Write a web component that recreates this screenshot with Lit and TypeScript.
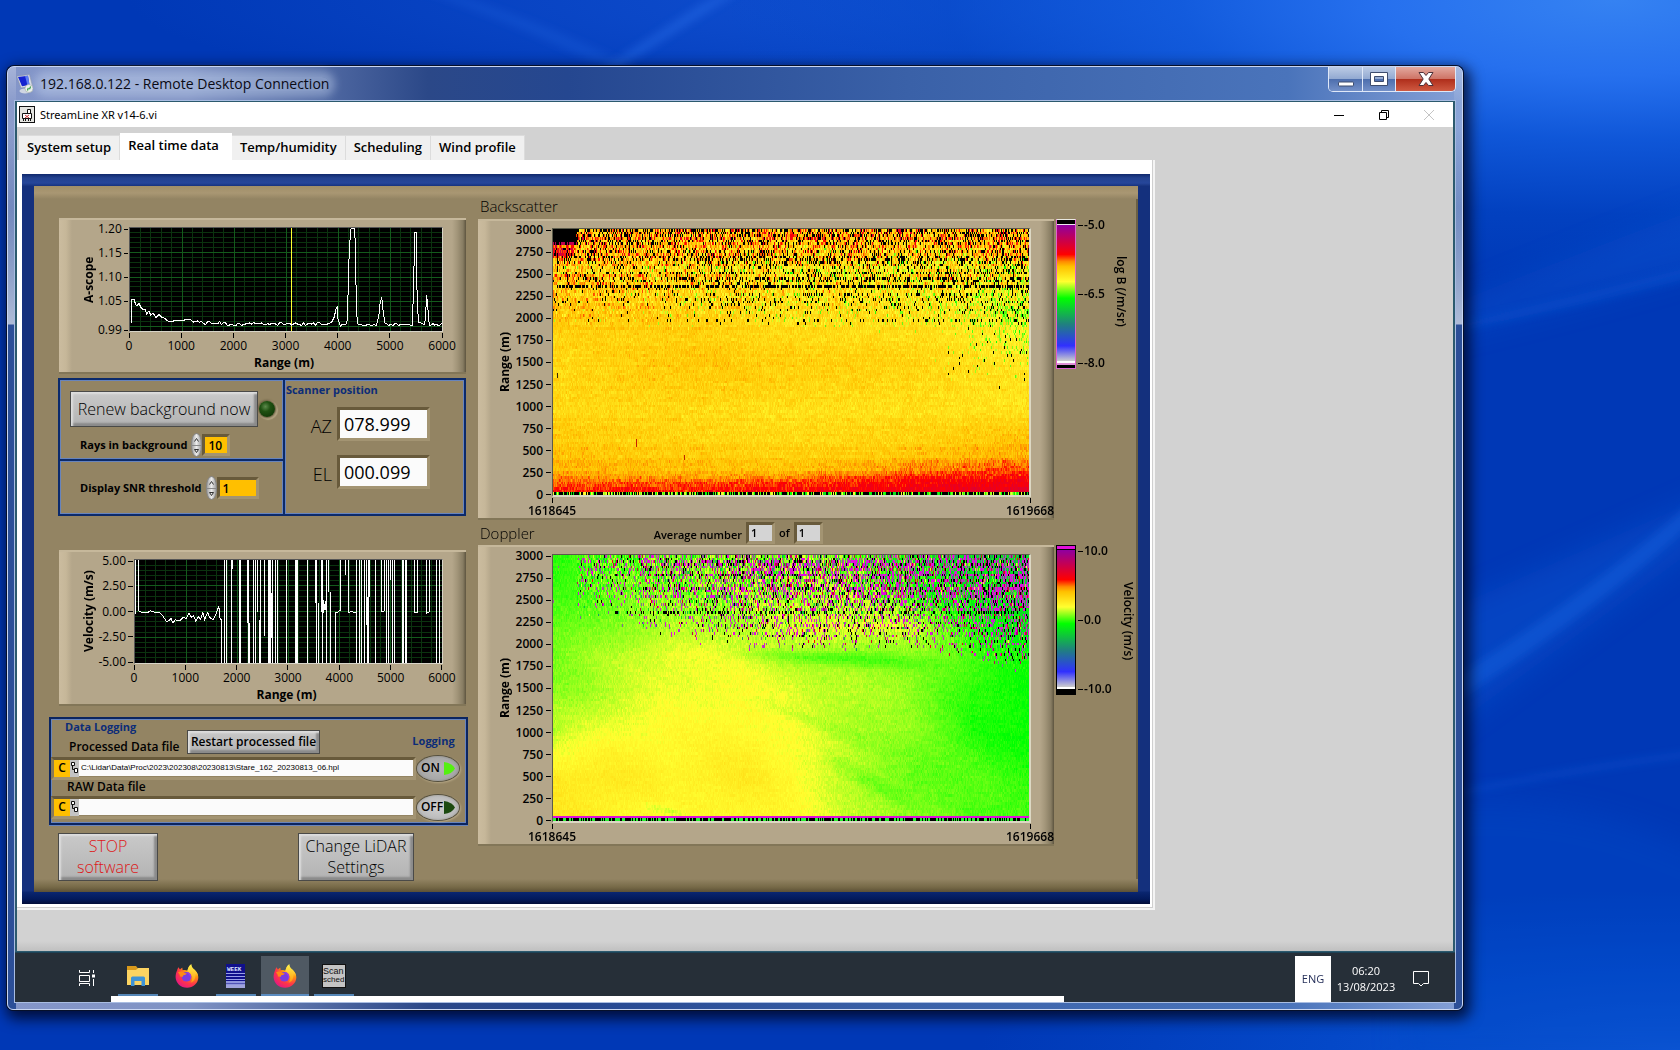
import { LitElement, html, svg, css, nothing } from "lit";
import { customElement, property, state, query } from "lit/decorators.js";
import { classMap } from "lit/directives/class-map.js";
import { styleMap } from "lit/directives/style-map.js";

/* ---------- shared helpers ---------- */

const FONT = css`"Open Sans", "Noto Sans", "Liberation Sans", sans-serif`;

function rng(seed: number) {
  let s = seed >>> 0;
  return () => {
    s = (s + 0x6d2b79f5) >>> 0;
    let t = s;
    t = Math.imul(t ^ (t >>> 15), t | 1);
    t ^= t + Math.imul(t ^ (t >>> 7), t | 61);
    return ((t ^ (t >>> 14)) >>> 0) / 4294967296;
  };
}

type RGB = [number, number, number];
const RAMP: [number, RGB][] = [
  [0, [205, 205, 205]],
  [0.125, [48, 48, 255]],
  [0.28, [32, 128, 128]],
  [0.47, [0, 255, 0]],
  [0.59, [255, 255, 48]],
  [0.7, [255, 192, 0]],
  [0.735, [255, 140, 0]],
  [0.787, [255, 0, 0]],
  [1, [143, 0, 160]],
];

function rampColor(t: number): RGB {
  if (t <= 0) return RAMP[0][1];
  for (let i = 1; i < RAMP.length; i++) {
    const [b, cb] = RAMP[i];
    if (t <= b) {
      const [a, ca] = RAMP[i - 1];
      const k = (t - a) / (b - a);
      return [0, 1, 2].map((n) => ca[n] + (cb[n] - ca[n]) * k) as RGB;
    }
  }
  return RAMP[RAMP.length - 1][1];
}

function sampleGrid(rows: number[], cols: number[], v: number[][], h: number, x: number) {
  const find = (arr: number[], q: number): [number, number] => {
    if (q <= arr[0]) return [0, 0];
    for (let i = 1; i < arr.length; i++) {
      if (q <= arr[i]) return [i - 1, (q - arr[i - 1]) / (arr[i] - arr[i - 1])];
    }
    return [arr.length - 2, 1];
  };
  const [r, kr] = find(rows, h);
  const [c, kc] = find(cols, x);
  const a = v[r][c] + (v[r][c + 1] - v[r][c]) * kc;
  const b = v[r + 1][c] + (v[r + 1][c + 1] - v[r + 1][c]) * kc;
  return a + (b - a) * kr;
}

const clamp = (v: number, a = 0, b = 1) => Math.max(a, Math.min(b, v));

/** Dark band following a line, fading in and out between two x fractions. */
const band = (x: number, from: number, to: number, dist: number, width: number) =>
  x <= from || x >= to ? 0 : Math.sin((Math.PI * (x - from)) / (to - from)) * Math.exp(-Math.pow(dist / width, 2));

const B_ROWS = [40, 150, 230, 320, 450, 700, 1000, 1500, 2000, 2500, 3000];
const B_COLS = [0, 0.25, 0.5, 0.75, 1];
const B_VALS = [
  [0.785, 0.775, 0.79, 0.81, 0.84],
  [0.75, 0.755, 0.77, 0.79, 0.805],
  [0.725, 0.715, 0.725, 0.77, 0.79],
  [0.705, 0.695, 0.685, 0.725, 0.765],
  [0.695, 0.68, 0.672, 0.69, 0.715],
  [0.68, 0.665, 0.655, 0.665, 0.69],
  [0.66, 0.66, 0.65, 0.645, 0.645],
  [0.655, 0.685, 0.675, 0.665, 0.63],
  [0.685, 0.675, 0.65, 0.65, 0.615],
  [0.68, 0.67, 0.65, 0.65, 0.65],
  [0.7, 0.7, 0.705, 0.7, 0.7],
];

const D_ROWS = [0, 500, 1000, 1500, 1900, 2200, 2600, 3000];
const D_COLS = [0, 0.12, 0.25, 0.4, 0.5, 0.6, 0.75, 0.88, 1];
const D_VALS = [
  [0.63, 0.61, 0.595, 0.605, 0.6, 0.572, 0.54, 0.51, 0.495],
  [0.625, 0.628, 0.61, 0.628, 0.6, 0.565, 0.52, 0.512, 0.492],
  [0.56, 0.59, 0.6, 0.602, 0.59, 0.56, 0.535, 0.49, 0.47],
  [0.535, 0.555, 0.583, 0.594, 0.575, 0.558, 0.54, 0.487, 0.47],
  [0.527, 0.553, 0.582, 0.578, 0.556, 0.54, 0.535, 0.505, 0.478],
  [0.512, 0.535, 0.55, 0.555, 0.565, 0.583, 0.57, 0.49, 0.43],
  [0.5, 0.515, 0.535, 0.54, 0.553, 0.555, 0.5, 0.45, 0.41],
  [0.49, 0.51, 0.525, 0.53, 0.545, 0.535, 0.47, 0.42, 0.39],
];

const BLACK: RGB = [0, 0, 0];
const MAGENTA: RGB = [226, 16, 220];

/* ---------- axes shared by both chart kinds ---------- */

interface Tick {
  label: string;
  /** distance to the next tick, in axis units */
  gap: number;
}

const yAxis = (ticks: Tick[]) => html`<div class="yaxis">
  ${ticks.map(
    (t) => html`<div class="yseg" style=${styleMap({ flexGrow: String(t.gap) })}>
      <span class="ytick">${t.label}</span>
    </div>`
  )}
</div>`;

const xAxis = (ticks: Tick[]) => html`<div class="xaxis">
  ${ticks.map(
    (t) => html`<div class="xseg" style=${styleMap({ flexGrow: String(t.gap) })}>
      <span class="xtick">${t.label}</span>
    </div>`
  )}
</div>`;

const chartStyles = css`
  :host {
    display: block;
    box-sizing: border-box;
    font: 12px/16px ${FONT};
    color: #000;
    background:
      linear-gradient(90deg, #cbbc9f 0, #c6b799 7px, #b4a68a 13px, transparent 13px),
      linear-gradient(270deg, #5d543f 0, #877c62 3px, #a3967a 9px, #b4a68a 14px, transparent 14px),
      #b4a68a;
    border-top: 2px solid #c6b89b;
    border-bottom: 2px solid #827658;
  }
  .body {
    display: grid;
  }
  .ytitle {
    writing-mode: vertical-rl;
    transform: rotate(180deg);
    text-align: center;
    font-weight: 700;
    line-height: 18px;
    white-space: nowrap;
  }
  .yaxis {
    display: flex;
    flex-direction: column;
    padding: 2px 1px 2px 0;
  }
  .yseg {
    flex: 0 0 0;
    min-height: 0;
  }
  .ytick {
    display: flex;
    justify-content: flex-end;
    align-items: center;
    gap: 2px;
    height: 0;
    line-height: 0;
  }
  .ytick::after {
    content: "";
    width: 5px;
    height: 1px;
    background: #000;
  }
  .xaxis {
    grid-column: 3;
    display: flex;
    padding: 1px 1px 0 0;
  }
  .xseg {
    flex: 0 0 0;
    min-width: 0;
  }
  .xtick {
    display: flex;
    flex-direction: column;
    align-items: center;
    width: 0;
    white-space: nowrap;
  }
  .xtick::before {
    content: "";
    width: 1px;
    height: 5px;
    background: #000;
  }
`;

/* ---------- line chart ---------- */

@customElement("scope-chart")
export class ScopeChart extends LitElement {
  @property() ytitle = "";
  @property() kind: "ascope" | "velocity" = "ascope";

  static styles = [
    chartStyles,
    css`
      :host {
        padding: 7px 23px 0 21px;
        height: 156px;
      }
      .body {
        grid-template-columns: 18px 31px minmax(0, 1fr);
        grid-template-rows: 105px auto auto;
      }
      .body.velocity {
        grid-template-columns: 18px 36px minmax(0, 1fr);
      }
      .plot {
        box-sizing: border-box;
        display: block;
        width: 100%;
        height: 105px;
        background: #000;
        border: 1px solid #565656;
        border-right-color: #d8d4c8;
        border-bottom-color: #d8d4c8;
      }
      .minor {
        stroke: #0b330f;
      }
      .major {
        stroke: #145a1c;
      }
      .cursor {
        stroke: #ffff30;
      }
      .trace {
        fill: none;
        stroke: #fff;
      }
      .plot * {
        vector-effect: non-scaling-stroke;
        shape-rendering: crispEdges;
      }
      .xtitle {
        grid-column: 3;
        text-align: center;
        font-weight: 700;
        line-height: 18px;
        padding-right: 4px;
      }
    `,
  ];

  private ascopePath() {
    const pts: [number, number][] = [
      [274, 370], [277, 298], [284, 298], [287, 312], [292, 318], [298, 309], [303, 321],
      [309, 327], [316, 327], [321, 342], [328, 333], [333, 345], [341, 340], [349, 352],
      [358, 344], [366, 352], [374, 354], [382, 362], [398, 366], [406, 360], [424, 363],
      [442, 358], [452, 359], [462, 366], [474, 363],
    ];
    const r = rng(12);
    for (let x = 480; x <= 880; x += 6) pts.push([x, 371 + (x < 560 ? -2 : 2) + (r() - 0.5) * 11]);
    pts.push([885, 350], [889, 328], [893, 322], [896, 360], [903, 378], [910, 372], [919, 374],
      [925, 356], [926, 260], [930, 140], [935, 84], [946, 84], [949, 200], [951, 340], [956, 374]);
    for (let x = 962; x <= 1012; x += 6) pts.push([x, 374 + (r() - 0.5) * 9]);
    pts.push([1018, 350], [1022, 310], [1027, 291], [1031, 330], [1036, 368]);
    for (let x = 1042; x <= 1112; x += 6) pts.push([x, 374 + (r() - 0.5) * 7]);
    pts.push([1118, 378], [1122, 290], [1126, 98], [1130, 97], [1133, 270], [1137, 366], [1156, 374],
      [1159, 340], [1162, 285], [1166, 330], [1170, 378]);
    for (let x = 1176; x <= 1206; x += 5) pts.push([x, 373 + (r() - 0.5) * 7]);
    return "M" + pts.map((p) => p.map((n) => Math.round(n)).join(",")).join("L");
  }

  private velocityPath() {
    const T = 58;
    const B = 372;
    let d = "M289,222V" + T + "M298," + T + "V214";
    const r = rng(5);
    const base: [number, number][] = [
      [298, 214], [310, 218], [322, 218], [332, 211], [345, 218], [362, 219], [370, 230], [380, 244],
      [388, 241], [394, 235], [400, 247], [407, 240], [420, 242], [430, 231], [440, 234], [448, 221],
      [456, 232], [462, 228], [469, 242], [476, 230], [483, 238], [490, 216], [495, 240], [504, 220],
      [511, 232], [520, 240], [528, 226], [534, 208], [538, 200], [542, 240], [547, 238], [547, B],
    ];
    d += "M" + base.map((p) => `${p[0]},${p[1] + (p[0] > 320 && p[0] < 530 ? Math.round((r() - 0.5) * 4) : 0)}`).join("L");
    const full = [
      556, 562, 577, 604, 626, 642, 648, 664, 687, 690, 693, 700, 708, 715, 740, 767, 770, 775, 805, 832,
      850, 862, 952, 960, 966, 975, 987, 1007, 1042, 1047, 1064, 1088, 1093, 1097, 1102, 1192, 1199,
    ];
    d += full.map((x) => `M${x},${T}V${B}`).join("");
    const parts: [number, number, number][] = [
      [580, T, 88], [599, T, 236], [601, 236, B], [623, T, 248], [629, 248, B], [654, T, 216], [661, 240, B],
      [676, T, 288], [697, 160, 294], [828, T, 190], [836, 190, B], [846, T, 216], [853, 180, 220],
      [857, 182, 210], [868, T, 156], [872, 156, 188], [874, 186, B], [887, 216, B], [902, T, 214],
      [919, T, 104], [928, T, 220], [984, 170, B], [980, T, 256], [989, T, 170], [1009, T, 92],
      [1025, T, 216], [1034, T, 214], [1054, T, 120], [1060, T, B], [1066, 330, B], [1124, T, 216],
      [1135, T, 218], [1160, T, 222], [1170, T, 216], [1190, T, 184],
    ];
    d += parts.map(([x, a, b]) => `M${x},${a}V${b}`).join("");
    d += "M887,216L894,217L902,211M928,218L934,214L940,216L946,217L952,220M1025,215H1034M1124,216H1135M1160,220L1164,216H1170M853,214L857,190";
    return d;
  }

  render() {
    const vel = this.kind === "velocity";
    const x0 = vel ? 286 : 271;
    const w = vel ? 922 : 937;
    const y0 = vel ? 60 : 84;
    const h = 309;
    const minorX = Array.from({ length: 29 }, (_, i) => x0 + ((i + 1) * w) / 30);
    const minorY: number[] = [];
    const majorY: number[] = [];
    if (vel) {
      for (let i = 1; i < 20; i++) (i % 5 ? minorY : majorY).push(y0 + (i * h) / 20);
    } else {
      for (let i = 1; i < 21; i++) (i % 5 ? minorY : majorY).push(y0 + (i * h) / 21);
    }
    const line = (cls: string, xa: number, ya: number, xb: number, yb: number) =>
      svg`<line class=${cls} x1=${xa} y1=${ya} x2=${xb} y2=${yb}></line>`;
    const ys: Tick[] = vel
      ? ["5.00", "2.50", "0.00", "-2.50", "-5.00"].map((label, i) => ({ label, gap: i < 4 ? 1 : 0 }))
      : ["1.20", "1.15", "1.10", "1.05", "0.99"].map((label, i) => ({ label, gap: [5, 5, 5, 6, 0][i] }));
    const xs: Tick[] = ["0", "1000", "2000", "3000", "4000", "5000", "6000"].map((label, i) => ({
      label,
      gap: i < 6 ? 1 : 0,
    }));
    return html`<div class=${classMap({ body: true, velocity: vel })}>
      <div class="ytitle">${this.ytitle}</div>
      ${yAxis(ys)}
      <svg class="plot" viewBox="${x0} ${y0} ${w} ${h}" preserveAspectRatio="none" role="img" aria-label=${this.ytitle}>
        ${minorX.map((x, i) => ((i + 1) % 5 ? line("minor", x, y0, x, y0 + h) : nothing))}
        ${minorY.map((y) => line("minor", x0, y, x0 + w, y))}
        ${minorX.map((x, i) => ((i + 1) % 5 ? nothing : line("major", x, y0, x, y0 + h)))}
        ${majorY.map((y) => line("major", x0, y, x0 + w, y))}
        ${vel ? nothing : line("cursor", 757, y0, 757, y0 + h)}
        <path class="trace" d=${vel ? this.velocityPath() : this.ascopePath()}></path>
      </svg>
      ${xAxis(xs)}
      <div class="xtitle">Range (m)</div>
    </div>`;
  }
}

/* ---------- intensity chart ---------- */

@customElement("heat-map")
export class HeatMap extends LitElement {
  @property() kind: "backscatter" | "doppler" = "backscatter";
  @query("canvas") private canvas!: HTMLCanvasElement;

  static styles = [
    chartStyles,
    css`
      :host {
        padding: 7px 23px 0 18px;
        height: 301px;
      }
      .body {
        grid-template-columns: 18px 38px minmax(0, 1fr);
        grid-template-rows: 269px auto;
      }
      .ytick,
      .xtick {
        font-weight: 600;
      }
      .ytick {
        gap: 3px;
      }
      .plot {
        box-sizing: border-box;
        display: block;
        width: 100%;
        height: 269px;
        border: 1px solid #5b5b4b;
        border-right: 2px solid #dcd8c4;
        border-bottom: 2px solid #dcd8c4;
        image-rendering: pixelated;
      }
    `,
  ];

  private backscatterCell(h: number, fx: number, x: number, rowOff: number, rowBlack: number, c: number, rand: () => number): RGB {
    const n = rand() + rand() - 1;
    const pick = rand();
    const pick2 = rand();
    const up = clamp((h - 1900) / 600);
    const top = clamp((h - 2600) / 150);
    let t = sampleGrid(B_ROWS, B_COLS, B_VALS, h, fx);
    t += n * (0.036 + up * 0.085) + c * (0.024 + up * 0.02) + rowOff * (0.018 + up * 0.03);
    t += top * Math.max(0, n) * 0.05;
    const onset = clamp((h - 1800 - rowBlack * 200) / 500);
    let pb = onset * (0.06 + up * 0.06) * (0.6 + rowBlack);
    pb += clamp((h - 2080) / 250) * Math.max(0, rowBlack - 0.3) * 0.28 * (1 - top * 0.4);
    pb += 0.04 * clamp((fx - 0.78) / 0.22) * clamp((h - 1150) / 500);
    if (h > 2900) pb += 0.05 + rowBlack * 0.1;
    if (h > 2940 && h < 2970) pb = 0.5;
    if (h > 2630 && h < 2670) pb = 0.26;
    if (h > 1965 && h < 2000) pb = 0.15 * fx + 0.03;
    pb *= fx < 0.25 && h < 2700 ? 0.6 : 1;
    if (h > 2355 && h < 2385) pb = 0.66 * (0.7 + 0.3 * clamp(fx / 0.3));
    const green =
      clamp((h - 1850) / 250) * clamp((2850 - h) / 200) * 0.2 * (0.25 + fx) +
      clamp((fx - 0.78) / 0.22) * clamp((h - 1250) / 500) * clamp((2600 - h) / 300) * 0.22;
    if (pick2 < green) t -= 0.06 + rand() * 0.06;
    if (h < 1950 && h > 600 && t > 0.725) t = 0.725;
    if (h < 1300) t = Math.max(t, 0.6);
    const dx = x + (rand() - 0.5) * 3;
    if (dx < 24 && h > 2870) return BLACK;
    if (dx < 22 && h > 2840) return pick2 < 0.5 ? BLACK : [190, 0, 80];
    if (dx < 22 && h > 2790) return rampColor(0.66 + pick * 0.2);
    if (dx < 14 + rand() * 10 && h > 2700) return pick2 < 0.2 ? BLACK : rampColor(0.74 + pick * 0.18);
    if (x === 83 && h > 540 && h < 640) return [200, 30, 0];
    if (x === 131 && h > 390 && h < 480) return [190, 40, 0];
    if (x === 4 && h > 1320 && h < 1400) return [60, 40, 0];
    return pick < pb ? BLACK : rampColor(t);
  }

  private dopplerCell(h: number, fx: number, rowOff: number, c: number, rand: () => number): RGB {
    const n = rand() + rand() - 1;
    const pick = rand();
    const pick2 = rand();
    let t = sampleGrid(D_ROWS, D_COLS, D_VALS, h, fx);
    t += n * 0.016 + c * 0.01 + Math.sin(fx * 26 + h / 160) * 0.004;
    t -= 0.04 * band(fx, 0.34, 0.84, h - (1900 - Math.max(0, fx - 0.4) * 300), 75);
    t -= 0.018 * band(fx, 0.35, 0.72, h - (1650 - (fx - 0.3) * 2100), 80);
    t -= 0.026 * band(fx, 0.54, 0.8, h - (760 - (fx - 0.56) * 2900), 110);
    t -= 0.03 * band(fx, 0.17, 0.3, h - (200 - (fx - 0.18) * 1200), 50);
    const start = 2330 - clamp(fx / 0.4) * 420 - clamp((fx - 0.8) / 0.2) * 260;
    const k = clamp((h - start) / 850);
    let p = Math.pow(k, 0.9) * (0.46 + fx * 0.3);
    if (fx < 0.05) p *= 0.04;
    else if (fx < 0.18) p *= 0.7;
    p *= 1 + rowOff * 0.7;
    const dashed = h > 2355 && h < 2385 && fx > 0.12;
    if (dashed) p = 0.45;
    if (fx > 0.05) t += n * 0.065 * k;
    if (pick >= p) return rampColor(t);
    if (dashed) return pick2 < 0.65 ? BLACK : rampColor(0.3 + rand() * 0.3);
    if (pick2 < 0.4) return MAGENTA;
    if (pick2 < 0.58) return BLACK;
    if (pick2 < 0.7) return rampColor(0.88 + n * 0.1);
    if (pick2 < 0.86) return [140, 100, 150];
    return rampColor(0.3 + rand() * 0.3);
  }

  firstUpdated() {
    const ctx = this.canvas.getContext("2d");
    if (!ctx) return;
    const W = this.canvas.width;
    const H = this.canvas.height;
    const img = ctx.createImageData(W, H);
    const ROWS = 100;
    const dop = this.kind === "doppler";
    const rand = rng(dop ? 77 : 31);
    const coarse = Array.from({ length: 60 * ROWS }, () => rand() - 0.5);
    for (let r = 0; r < ROWS; r++) {
      const y0 = Math.round((r * H) / ROWS);
      const y1 = Math.round(((r + 1) * H) / ROWS);
      const h = 3000 - r * 30;
      const rowOff = rand() - 0.5;
      const rowBlack = rand();
      for (let x = 0; x < W; x++) {
        const fx = x / W;
        const c = coarse[Math.floor(x / 8) + 60 * r];
        let col: RGB;
        if (r === ROWS - 1) {
          if (rand() < 0.55) col = BLACK;
          else col = dop ? [40, 240, 50] : rampColor(0.44 + rand() * 0.2 - fx * 0.05);
        } else if (dop) {
          col = r === ROWS - 2 ? MAGENTA : this.dopplerCell(h, fx, rowOff, c, rand);
        } else {
          col = this.backscatterCell(h, fx, x, rowOff, rowBlack, c, rand);
        }
        for (let y = y0; y < y1; y++) {
          const i = (y * W + x) * 4;
          img.data[i] = col[0];
          img.data[i + 1] = col[1];
          img.data[i + 2] = col[2];
          img.data[i + 3] = 255;
        }
      }
    }
    ctx.putImageData(img, 0, 0);
  }

  render() {
    const ys: Tick[] = [];
    for (let v = 3000; v >= 0; v -= 250) ys.push({ label: String(v), gap: v ? 1 : 0 });
    return html`<div class="body">
      <div class="ytitle">Range (m)</div>
      ${yAxis(ys)}
      <canvas class="plot" width="475" height="266" role="img" aria-label=${this.kind}></canvas>
      ${xAxis([
        { label: "1618645", gap: 1 },
        { label: "1619668", gap: 0 },
      ])}
    </div>`;
  }
}

/* ---------- colour scale ---------- */

@customElement("color-ramp")
export class ColorRamp extends LitElement {
  @property({ type: Array }) labels: string[] = [];
  @property() caption = "";
  @property({ type: Boolean, reflect: true }) signed = false;

  static styles = css`
    :host {
      display: flex;
      gap: 2px;
      align-items: flex-start;
      font: 600 12px/16px ${FONT};
      color: #000;
    }
    .bar {
      box-sizing: border-box;
      display: flex;
      flex-direction: column;
      width: 20px;
      height: 150px;
      border: 1px solid #e060d0;
      border-top-color: #e8e8e0;
    }
    .over {
      height: 3px;
      background: #000;
      border-bottom: 1px solid #f0e8f0;
      border-top: 1px solid #000;
    }
    .under {
      height: 3px;
      background: #000;
      border-top: 2px solid #e090d8;
    }
    .ramp {
      flex: 1;
      background: linear-gradient(
        0deg,
        #fff 0,
        #fff 2px,
        #cdcdcd 2px,
        #3030ff 12.5%,
        #208080 28%,
        #00ff00 47%,
        #ffff30 59%,
        #ffc000 70%,
        #ff8c00 73.5%,
        #ff0000 78.7%,
        #8f00a0 100%
      );
    }
    :host([signed]) .bar {
      border-color: #000;
    }
    :host([signed]) .over {
      background: #e210dc;
      border-bottom-color: #000;
      border-top: 0;
    }
    :host([signed]) .under {
      border-top-color: #000;
    }
    .scale {
      box-sizing: border-box;
      display: flex;
      flex-direction: column;
      justify-content: space-between;
      height: 150px;
      width: 33px;
      padding: 6px 0;
    }
    :host([signed]) .scale {
      width: 40px;
    }
    .mark {
      display: flex;
      align-items: center;
      gap: 1px;
      height: 0;
      line-height: 0;
      white-space: nowrap;
    }
    .mark::before {
      content: "";
      width: 5px;
      height: 1px;
      background: #000;
    }
    .caption {
      writing-mode: vertical-rl;
      font-weight: 600;
      padding-top: 37px;
      white-space: nowrap;
    }
  `;

  render() {
    return html`<div class="bar"><div class="over"></div><div class="ramp"></div><div class="under"></div></div>
      <div class="scale">${this.labels.map((l) => html`<span class="mark">${l}</span>`)}</div>
      <div class="caption">${this.caption}</div>`;
  }
}

/* ---------- icons ---------- */

const firefoxIcon = (id: string) => html`<svg class="ico" viewBox="0 0 24 24" width="24" height="24" aria-hidden="true">
  <defs>
    <radialGradient id="ff-a-${id}" cx="0.8" cy="0.15" r="1">
      <stop offset="0.1" stop-color="#fff44f"></stop>
      <stop offset="0.4" stop-color="#ff980e"></stop>
      <stop offset="0.7" stop-color="#ff3647"></stop>
      <stop offset="1" stop-color="#e31587"></stop>
    </radialGradient>
    <linearGradient id="ff-b-${id}" x1="0" y1="0" x2="0" y2="1">
      <stop offset="0" stop-color="#fff44f"></stop>
      <stop offset="1" stop-color="#ff980e"></stop>
    </linearGradient>
  </defs>
  <path fill="url(#ff-a-${id})" d="M2.2 6.2C2.4 5 3 3.800 3.800 3.200c.1 1 .6 1.800 1.200 2.300C5.600 4.700 6.400 4 7.500 3.800c-.3.8-.1 1.700.3 2.400 2-.3 3.500 0 4.600.5C13 4.300 14 1.400 16.300.2c-.1 1.800.6 3 1.700 4.200 2.600 2 5.500 4.800 5.300 9.300-.3 5.600-5 10-11.200 10C5.600 23.700.8 19 .6 13.200.6 10.500 1.200 8 2.200 6.200z"></path>
  <path fill="url(#ff-b-${id})" d="M12.400 6.700C13 4.300 14 1.400 16.300.2c-.1 1.800.6 3 1.700 4.200 2.600 2 4.900 4.600 5.100 8-.8-2-2-3-3-3.600.8 4.600-.4 8.500-4.400 10 1.800-2.800 2-5.400.9-7.800-.9-1.900-2.400-2.600-4.200-4.300z"></path>
  <circle cx="11.500" cy="12.800" r="4.800" fill="#7a3de0"></circle>
  <path fill="#a13be8" d="M11.500 8a4.800 4.800 0 0 1 4.800 4.800c0 1-.3 1.900-.8 2.600.3-3-1-5-4-7.400z"></path>
  <path fill="#ff8a16" d="M2.800 8.600C4.700 7.500 6.400 7.300 8 8c1 1 2.400 1.300 3.700 1.200-.2 1.200-1.300 1.600-2.600 1.900-1 .3-1.200 1-1.400 2-.9-.6-1.900-.7-2.700-.3 0-1.700-.8-3.400-2.200-4.200z"></path>
</svg>`;

const pathGlyph = html`<svg class="pathglyph" viewBox="0 0 9 17" width="9" height="17" aria-hidden="true">
  <path fill="#fff" stroke="#111" d="M1.500 2.500h3v3h-3zM4.500 8.500h3v4h-3z"></path>
  <path fill="none" stroke="#111" d="M2.500 5.500v4h2"></path>
</svg>`;

/* ---------- application ---------- */

@customElement("app-root")
export class AppRoot extends LitElement {
  @state() private tab = 1;

  static styles = css`
    :host {
      display: block;
      font: 12px/16px ${FONT};
      color: #000;
    }
    button,
    input {
      font: inherit;
      color: inherit;
      margin: 0;
      padding: 0;
      border: 0;
      border-radius: 0;
      min-width: 0;
      box-sizing: border-box;
    }
    .desktop {
      position: relative;
      box-sizing: border-box;
      display: flex;
      min-height: 100vh;
      padding: 66px 217px 40px 7px;
      overflow: hidden;
      background:
        radial-gradient(ellipse 900px 290px at 96% 0, #3582f2 0, #2670ee 26%, rgba(18, 92, 222, 0.85) 48%, rgba(4, 72, 200, 0.55) 74%, transparent 100%),
        radial-gradient(ellipse 1150px 130px at 76% 0, rgba(30, 100, 232, 0.8) 0, transparent 100%),
        radial-gradient(ellipse 700px 160px at 100% 100%, #0f58d6 0, #0448c8 50%, transparent 100%),
        #0038b6;
    }
    .beams {
      position: absolute;
      inset: 0;
      width: 100%;
      height: 100%;
    }
    .window {
      position: relative;
      flex: 1;
      min-width: 0;
      display: flex;
      flex-direction: column;
      border: 1px solid #c9d6f2;
      border-radius: 7px 7px 6px 6px;
      padding: 0 6px 6px;
      box-shadow: 0 0 0 1px #06102a, 3px 5px 14px 4px rgba(0, 0, 20, 0.75);
      background:
        linear-gradient(180deg, rgba(255, 255, 255, 0.28) 0, rgba(255, 255, 255, 0.05) 36px, rgba(255, 255, 255, 0.12) 140px, rgba(255, 255, 255, 0.62) 257px, transparent 258px) left / 8px 100% no-repeat,
        linear-gradient(180deg, rgba(255, 255, 255, 0.28) 0, rgba(255, 255, 255, 0.05) 36px, rgba(255, 255, 255, 0.12) 140px, rgba(255, 255, 255, 0.62) 257px, transparent 258px) right / 8px 100% no-repeat,
        linear-gradient(180deg, transparent 60px, #2c4f98 258px) left / 8px 100% no-repeat,
        linear-gradient(180deg, transparent 60px, #2c4f98 258px) right / 8px 100% no-repeat,
        linear-gradient(90deg, #8496c9 0, #8093c4 180px, #2b4888 420px, #254790 560px, #3a61a8 900px, #4a74bb 1280px, #85a0d6 100%);
    }
    .caption {
      display: flex;
      align-items: flex-start;
      height: 33px;
    }
    .caption h1 {
      flex: 1;
      display: flex;
      align-items: center;
      gap: 6px;
      margin: 0;
      padding: 7px 0 0 2px;
      font-size: 14px;
      line-height: 24px;
      font-weight: 400;
      color: #0a0a14;
    }
    .caption h1 span {
      border-radius: 8px;
      background: rgba(196, 210, 238, 0.45);
      box-shadow: 0 0 8px 6px rgba(196, 210, 238, 0.45);
      line-height: 14px;
    }
    .winbtns {
      display: flex;
      height: 24px;
      border: 1px solid #dfe8f8;
      border-top: 0;
      border-radius: 0 0 5px 5px;
      overflow: hidden;
    }
    .winbtns button {
      display: grid;
      place-items: center;
      width: 33px;
      border-right: 1px solid #dfe8f8;
      background: linear-gradient(180deg, #bccbe5 0, #93aad2 48%, #4e6fae 52%, #7390c8 100%);
    }
    .winbtns button:first-child {
      width: 34px;
    }
    .winbtns button.close {
      width: 59px;
      border-right: 0;
      background: linear-gradient(180deg, #e3a99f 0, #cf7567 48%, #b02f1c 52%, #cf5a42 100%);
    }
    .client {
      flex: 1;
      min-height: 0;
      display: flex;
      flex-direction: column;
      border: 1px solid #a9bde2;
      background: #1d4256;
    }
    .app {
      flex: 1;
      display: flex;
      flex-direction: column;
      border: 2px solid #2c5a6e;
      border-width: 1px 2px 1px 2px;
      background: linear-gradient(0deg, #c0c0c0 0, #d2d2d2 10px);
    }
    .appbar {
      display: flex;
      align-items: center;
      gap: 5px;
      height: 25px;
      padding: 0 2px;
      background: #fff;
      font-family: "Noto Sans", "Open Sans", sans-serif;
      font-size: 11px;
    }
    .appbar .title {
      flex: 1;
    }
    .appbar button {
      width: 45px;
      height: 22px;
      display: grid;
      place-items: center;
      background: none;
      margin-left: -5px;
    }
    .appbar button.first {
      margin-left: 0;
    }
    .workspace {
      flex: 1;
      display: grid;
      grid-template-columns: minmax(0, 1fr) 298px;
      align-content: start;
      padding-top: 6px;
    }
    .tabs {
      display: flex;
      align-items: flex-end;
      padding-left: 2px;
      font-size: 13px;
      font-weight: 600;
    }
    .tabs button {
      height: 25px;
      padding: 0 8px 2px;
      background: #f0f0f0;
      border: 1px solid #dcdcdc;
      border-width: 1px 1px 0 0;
      line-height: 20px;
    }
    .tabs button.on {
      height: 27px;
      padding: 0 12px 4px 8px;
      background: #fff;
      border-color: #fff;
    }
    .page {
      background: #fff;
      border: 1px solid #f4f4f4;
      border-width: 0 2px 2px 0;
      box-shadow: inset -1px -1px #cfcfcf;
      padding: 14px 3px 4px 5px;
    }
    .frame {
      padding: 12px;
      background:
        linear-gradient(180deg, #10286c 0, #23428f 4px, #26469a 9px, #17337e 12px, transparent 12px),
        linear-gradient(0deg, #020d38 0, #031a5c 5px, #0a2670 12px, transparent 13px),
        #14307d;
    }
    .panel {
      display: grid;
      grid-template-columns: minmax(0, 420fr) minmax(0, 660fr);
      gap: 9px;
      padding: 0 0 11px 15px;
      background:
        linear-gradient(180deg, #a18f68 0, #a99773 7px, #938463 13px, transparent 13px),
        linear-gradient(0deg, #5c5035 0, #776a48 5px, #938463 13px, transparent 13px),
        linear-gradient(270deg, #6b6044 0, #6b6044 2px, transparent 2px),
        #938463;
    }
    .left {
      padding-top: 32px;
    }
    .left scope-chart,
    .left .controls,
    .left .actions {
      margin: 0 3px 0 10px;
    }
    .controls {
      box-sizing: border-box;
      display: grid;
      grid-template-columns: minmax(0, 224fr) minmax(0, 180fr);
      grid-template-rows: 79px 53px;
      gap: 2px;
      height: 138px;
      border: 2px solid #0b2a6b;
      background: #0b2a6b;
    }
    .left .controls {
      margin: 4px 3px 34px 9px;
    }
    .cell {
      background: #938463;
      box-shadow: inset 1px 1px #6784bd, inset -1px -1px #6784bd;
      min-width: 0;
    }
    .cell.scanner {
      grid-row: 1 / 3;
      grid-column: 2;
      padding: 2px 1px;
    }
    .cell.renew {
      padding: 11px 0 0 10px;
    }
    .cell.snr {
      padding: 15px 0 0 20px;
    }
    .row {
      display: flex;
      align-items: center;
    }
    .blue {
      color: #0c2c78;
      font-weight: 700;
      font-size: 11px;
    }
    .b11 {
      font-weight: 700;
      font-size: 11px;
    }
    .metal {
      border: 1px solid #4a4a48;
      background: linear-gradient(180deg, #c9c9c9, #b3b3b3);
      box-shadow: inset 2px 2px 2px #dedede, inset -3px -3px 2px #8b8b8b;
      text-align: center;
    }
    .thin {
      font-weight: 300;
      font-size: 16px;
      line-height: 21px;
    }
    .metal.renewbtn {
      width: 188px;
      height: 36px;
      white-space: nowrap;
    }
    .led {
      width: 16px;
      height: 16px;
      margin-left: 1px;
      border-radius: 50%;
      background: radial-gradient(circle at 40% 35%, #5d8a4c 0, #1f5112 35%, #123a08 75%);
      box-shadow: 0 0 2px 1px #5c5035, 1px 1px 1px 2px #b5a684;
    }
    .sunk {
      display: inline-flex;
      border: 3px solid;
      border-color: #685a3b #a39472 #a39472 #685a3b;
    }
    .sunk input {
      width: 100%;
      height: 100%;
    }
    .spin {
      display: grid;
      grid-template-rows: 1fr 1fr;
      width: 11px;
      height: 24px;
      border-radius: 6px / 12px;
      overflow: hidden;
      background: linear-gradient(90deg, #a2a2a2, #ececec 50%, #a2a2a2);
      border: 1px solid #888;
      box-sizing: border-box;
    }
    .spin button {
      display: grid;
      place-items: center;
      background: none;
    }
    .spin button + button {
      border-top: 1px solid #888;
    }
    .orange input {
      background: #ffbf00;
      padding: 0 3px;
      font-weight: 600;
    }
    .rays {
      padding: 6px 0 0 10px;
    }
    .rays .b11,
    .snr .b11 {
      margin-right: 4px;
    }
    .rays .sunk {
      width: 22px;
      height: 16px;
    }
    .snr .sunk {
      width: 36px;
      height: 16px;
    }
    .axisrow {
      display: flex;
      align-items: center;
      justify-content: flex-end;
      gap: 5px;
      padding-right: 33px;
      height: 34px;
    }
    .axisrow + .axisrow {
      margin-top: 14px;
    }
    .axisrow.first {
      margin-top: 9px;
    }
    .axisrow label {
      font-size: 18px;
      font-weight: 300;
      padding-top: 3px;
    }
    .axisrow .sunk {
      width: 87px;
      height: 28px;
    }
    .axisrow input {
      background: #fbfbfb;
      font-size: 18px;
      padding: 0 4px;
    }
    .logging {
      box-sizing: border-box;
      height: 108px;
      margin: 11px 1px 0 0;
      border: 2px solid #0b2560;
      box-shadow: inset 1px 1px #6784bd, inset -1px -1px #6784bd, 0 1px #6784bd;
      display: grid;
      grid-template-columns: minmax(0, 1fr) 46px;
      grid-template-rows: 37px 24px 14px 26px;
      align-items: center;
      padding: 0 4px 0 0;
    }
    .logging .head {
      display: flex;
      gap: 12px;
      align-self: start;
      align-items: flex-start;
    }
    .names {
      box-sizing: border-box;
      width: 124px;
      display: flex;
      flex-direction: column;
      gap: 4px;
      padding-left: 14px;
      white-space: nowrap;
    }
    .names .b12,
    .rawname {
      font-weight: 600;
      font-size: 12px;
    }
    .names .b12 {
      padding-left: 4px;
    }
    .rawname {
      padding-left: 16px;
      grid-column: 1 / 3;
    }
    .metal.restart {
      margin-top: 11px;
      width: 133px;
      height: 24px;
      font-weight: 600;
      white-space: nowrap;
      padding: 0;
    }
    .logging .loglabel {
      justify-self: center;
      padding-top: 6px;
      margin-left: -11px;
    }
    .path {
      display: flex;
      border: 3px solid;
      border-color: #685a3b #a39472 #a39472 #8a7b58;
      height: 17px;
    }
    .path .drive {
      width: 16px;
      background: #ffbf00;
      font-weight: 600;
    }
    .pathglyph {
      flex: none;
      width: 9px;
      height: 17px;
      background: #c4c4c4;
    }
    .path input {
      flex: 1;
      height: 16px;
      padding: 0 2px;
      background: #fbfbfb;
      font-family: "Liberation Sans", sans-serif;
      font-size: 8px;
      font-weight: 400;
    }
    .toggle {
      display: flex;
      align-items: center;
      justify-content: center;
      gap: 4px;
      width: 42px;
      height: 25px;
      margin-left: 1px;
      border-radius: 50%;
      font-weight: 600;
      font-size: 12px;
      background: radial-gradient(ellipse, #b8b8b8 0, #a8a8a8 60%, #6b6b6b 100%);
      box-shadow: 0 0 0 1px #55503f, 1px 1px 2px 1px #b5a684;
    }
    .toggle.off {
      background: radial-gradient(ellipse, #d0d0d0 0, #bdbdbd 60%, #777 100%);
      gap: 1px;
    }
    .toggle svg {
      flex: none;
    }
    .actions {
      display: flex;
      justify-content: space-between;
      padding: 8px 52px 0 0;
    }
    .left .actions {
      margin-left: 9px;
    }
    .actions .metal {
      height: 48px;
      width: 100px;
    }
    .actions .metal.stop {
      color: #dd1717;
    }
    .actions .metal.change {
      width: 116px;
    }
    .right {
      padding-top: 10px;
    }
    .charthead {
      display: flex;
      align-items: center;
      box-sizing: border-box;
      height: 23px;
      padding: 0 0 3px 2px;
    }
    .charthead h2 {
      margin: 0;
      font-size: 15px;
      font-weight: 300;
      line-height: 20px;
    }
    .charthead.second {
      height: 25px;
      padding-bottom: 0;
    }
    .charthead .avg {
      margin: 4px 4px 0 119px;
      font-weight: 600;
    }
    .charthead .sunk {
      width: 23px;
      height: 16px;
    }
    .charthead .sunk input {
      background: #d4d4d4;
      padding: 0 2px;
      font-weight: 600;
      font-size: 11px;
    }
    .charthead .of {
      padding: 0 4px;
      font-weight: 600;
    }
    .chartrow {
      display: grid;
      grid-template-columns: minmax(0, 1fr) 82px;
      gap: 2px;
    }
    .taskbar {
      display: grid;
      grid-template-columns: minmax(0, 1fr) auto;
      height: 49px;
      background: #262f38;
      border-top: 1px solid #1d4256;
    }
    .apps {
      display: flex;
      align-items: flex-start;
      padding: 3px 0 0 45px;
      height: 40px;
    }
    .apps button {
      display: grid;
      place-items: center;
      width: 49px;
      height: 40px;
      background: none;
    }
    .apps button:first-child {
      width: 53px;
      padding-top: 3px;
    }
    .apps button.run {
      background: linear-gradient(#5587b8, #5587b8) center bottom / 40px 2px no-repeat;
    }
    .apps button.now {
      background: linear-gradient(#5b8cc0, #5b8cc0) center bottom / 100% 2px no-repeat, #4f5963;
      box-shadow: inset 1px 0 #262f38;
    }
    .strip {
      height: 6px;
      margin: 0 231px 0 96px;
      background: #fff;
    }
    .tray {
      display: flex;
      align-items: center;
      padding-top: 2px;
      color: #fff;
      font-size: 11px;
    }
    .tray .lang {
      width: 36px;
      height: 46px;
      background: #fff;
      color: #26305a;
    }
    .tray time {
      width: 70px;
      text-align: center;
    }
    .tray .note {
      display: grid;
      place-items: center;
      width: 16px;
      margin: 0 26px 0 12px;
      background: none;
    }
    .ico {
      display: block;
    }
  `;

  private spinner(name: string) {
    return html`<span class="spin">
      <button aria-label="Increase ${name}"><svg width="7" height="6" viewBox="0 0 7 6"><path fill="none" stroke="#333" d="M1.500 4.500L3.500 1.500L5.500 4.500"></path></svg></button>
      <button aria-label="Decrease ${name}"><svg width="7" height="6" viewBox="0 0 7 6"><path fill="none" stroke="#333" d="M1.500 1.500H5.500L3.500 4.500Z"></path></svg></button>
    </span>`;
  }

  private desktopBeams() {
    return html`<svg class="beams" viewBox="0 0 1680 1050" preserveAspectRatio="none" aria-hidden="true">
      <defs>
        <filter id="soft" x="-30%" y="-30%" width="160%" height="160%"><feGaussianBlur stdDeviation="14"></feGaussianBlur></filter>
        <filter id="fine" x="-20%" y="-20%" width="140%" height="140%"><feGaussianBlur stdDeviation="4"></feGaussianBlur></filter>
      </defs>
      <path d="M1400 345Q1560 310 1720 262V200Q1560 260 1400 325Z" fill="#0a52d2" opacity=".4" filter="url(#soft)"></path>
      <path d="M1440 332Q1560 312 1720 270V260Q1560 300 1440 328Z" fill="#0f58d6" opacity=".4" filter="url(#fine)"></path>
      <path d="M1380 640L1720 490V530L1380 780Z" fill="#0a52d2" opacity=".45" filter="url(#soft)"></path>
      <path d="M1400 710Q1580 605 1720 478V496Q1600 615 1400 735Z" fill="#1463e0" opacity=".45" filter="url(#fine)"></path>
      <path d="M1440 795Q1560 768 1720 748V752Q1560 773 1440 799Z" fill="#1260de" opacity=".4" filter="url(#fine)"></path>
      <path d="M1400 810Q1560 780 1720 860V1060H1400Z" fill="#0448c8" opacity=".4" filter="url(#soft)"></path>
      <path d="M600 70L700 5L730 -10H742L616 70Z" fill="#2f74ee" opacity=".4" filter="url(#fine)"></path>
      <path d="M440 -10Q540 20 640 70H610Q520 25 420 -10Z" fill="#2f74ee" opacity=".2" filter="url(#fine)"></path>
    </svg>`;
  }

  render() {
    const tabs = ["System setup", "Real time data", "Temp/humidity", "Scheduling", "Wind profile"];
    return html`<div class="desktop">
      ${this.desktopBeams()}
      <main class="window">
        <header class="caption">
          <h1>
            <svg class="ico" width="18" height="20" viewBox="0 0 18 20" aria-hidden="true">
              <path fill="#d9dde6" stroke="#8a93a8" stroke-width=".6" d="M.8 2.200L13.500.6L16.500 12L5 14Z"></path>
              <path fill="#1523d0" d="M2 3L12 1.700L13.500 11L6 12.200Z"></path>
              <path fill="#5a7af2" d="M9 2.100L12 1.700L13.500 11L11.500 11.300Z"></path>
              <ellipse cx="9" cy="17" rx="5.500" ry="2.400" fill="#cfd5e2"></ellipse>
              <circle cx="13" cy="14.500" r="4" fill="#eef2ee" stroke="#9aa6a0" stroke-width=".6"></circle>
              <path fill="none" stroke="#2b9a3b" stroke-width="1.200" d="M11.500 16.500L12.300 13.800M13.500 15.200L14.600 12.500"></path>
            </svg>
            <span>192.168.0.122 - Remote Desktop Connection</span>
          </h1>
          <div class="winbtns">
            <button aria-label="Minimize"><svg width="18" height="20" viewBox="0 0 18 20"><rect x="1.500" y="13" width="15" height="4" rx="1" fill="#fff" stroke="#3d4c6e"></rect></svg></button>
            <button aria-label="Maximize"><svg width="18" height="16" viewBox="0 0 18 16"><path fill="#fff" fill-rule="evenodd" stroke="#3d4c6e" d="M.5 1.500h17v13H.5zM4.500 5.500v5h9v-5z"></path></svg></button>
            <button class="close" aria-label="Close"><svg width="16" height="14" viewBox="0 0 16 14"><path fill="#fff" stroke="#4c3038" d="M1 .5h4.500L8 3.500L10.500.5H15L10.800 7L15 13.500h-4.500L8 10.500L5.500 13.500H1L5.200 7Z"></path></svg></button>
          </div>
        </header>
        <div class="client">
          <section class="app">
            <div class="appbar">
              <svg class="ico" width="16" height="17" viewBox="0 0 16 17" aria-hidden="true">
                <rect x=".5" y=".5" width="15" height="16" fill="#e4e4e0" stroke="#111"></rect>
                <path fill="#fff" stroke="#111" d="M3.500 7.500h9v5h-9zM8.500 7V3.500h3V7M4.500 12.500V15M11.500 12.500V15M6.500 15v-2.500M9.500 15v-2.500"></path>
                <path stroke="#c33" d="M6 9l4 3M10 9l-4 3"></path>
              </svg>
              <span class="title">StreamLine XR v14-6.vi</span>
              <button class="first" aria-label="Minimize panel"><svg width="10" height="10"><path stroke="#000" d="M0 5.500H10"></path></svg></button>
              <button aria-label="Restore panel"><svg width="10" height="10" viewBox="0 0 10 10"><path fill="none" stroke="#000" d="M.5 2.500h7v7h-7zM2.500 2.500v-2h7v7h-2"></path></svg></button>
              <button aria-label="Close panel"><svg width="10" height="10" viewBox="0 0 10 10"><path stroke="#c4c4c4" d="M0 0L10 10M10 0L0 10"></path></svg></button>
            </div>
            <div class="workspace">
              <div class="deck">
                <nav class="tabs" role="tablist">
                  ${tabs.map(
                    (t, i) => html`<button role="tab" aria-selected=${i === this.tab ? "true" : "false"}
                      class=${classMap({ on: i === this.tab })} @click=${() => (this.tab = i)}>${t}</button>`
                  )}
                </nav>
                <div class="page"><div class="frame"><div class="panel">
                  <div class="left">
                    <scope-chart kind="ascope" ytitle="A-scope"></scope-chart>
                    <div class="controls">
                      <div class="cell renew">
                        <div class="row">
                          <button class="metal thin renewbtn">Renew background now</button>
                          <span class="led" role="img" aria-label="Background idle"></span>
                        </div>
                        <div class="row rays">
                          <label class="b11" for="rays">Rays in background</label>
                          ${this.spinner("rays")}
                          <span class="sunk orange"><input id="rays" value="10"></span>
                        </div>
                      </div>
                      <div class="cell snr">
                        <div class="row">
                          <label class="b11" for="snr">Display SNR threshold</label>
                          ${this.spinner("threshold")}
                          <span class="sunk orange"><input id="snr" value="1"></span>
                        </div>
                      </div>
                      <div class="cell scanner">
                        <div class="blue">Scanner position</div>
                        <div class="axisrow first"><label for="az">AZ</label><span class="sunk"><input id="az" value="078.999" readonly></span></div>
                        <div class="axisrow"><label for="el">EL</label><span class="sunk"><input id="el" value="000.099" readonly></span></div>
                      </div>
                    </div>
                    <scope-chart kind="velocity" ytitle="Velocity (m/s)"></scope-chart>
                    <div class="logging">
                      <div class="head">
                        <div class="names">
                          <span class="blue">Data Logging</span>
                          <label class="b12" for="proc">Processed Data file</label>
                        </div>
                        <button class="metal restart">Restart processed file</button>
                      </div>
                      <span class="blue loglabel">Logging</span>
                      <div class="path">
                        <button class="drive" aria-label="Drive of processed file">C</button>${pathGlyph}
                        <input id="proc" value="C:\\Lidar\\Data\\Proc\\2023\\202308\\20230813\\Stare_162_20230813_06.hpl">
                      </div>
                      <button class="toggle" aria-pressed="true">ON
                        <svg width="11" height="13" viewBox="0 0 11 13"><path fill="#55f011" d="M0 0Q8 1 11 6.500Q8 12 0 13Z"></path></svg>
                      </button>
                      <label class="rawname" for="raw">RAW Data file</label>
                      <div class="path">
                        <button class="drive" aria-label="Drive of raw file">C</button>${pathGlyph}
                        <input id="raw" value="">
                      </div>
                      <button class="toggle off" aria-pressed="false">OFF
                        <svg width="11" height="13" viewBox="0 0 11 13"><path fill="#1c4a10" d="M0 0Q8 1 11 6.500Q8 12 0 13Z"></path></svg>
                      </button>
                    </div>
                    <div class="actions">
                      <button class="metal thin stop">STOP<br>software</button>
                      <button class="metal thin change">Change LiDAR<br>Settings</button>
                    </div>
                  </div>
                  <div class="right">
                    <div class="charthead"><h2>Backscatter</h2></div>
                    <div class="chartrow">
                      <heat-map kind="backscatter"></heat-map>
                      <color-ramp .labels=${["-5.0", "-6.5", "-8.0"]} caption="log B (/m/sr)"></color-ramp>
                    </div>
                    <div class="charthead second">
                      <h2>Doppler</h2>
                      <label class="b11 avg" for="avg">Average number</label>
                      <span class="sunk"><input id="avg" value="1" readonly></span>
                      <label class="b11 of" for="avgof">of</label>
                      <span class="sunk"><input id="avgof" value="1" readonly></span>
                    </div>
                    <div class="chartrow">
                      <heat-map kind="doppler"></heat-map>
                      <color-ramp signed .labels=${["10.0", "0.0", "-10.0"]} caption="Velocity (m/s)"></color-ramp>
                    </div>
                  </div>
                </div></div></div>
              </div>
            </div>
          </section>
          <footer class="taskbar">
            <div>
              <div class="apps">
                <button aria-label="Task view"><svg width="16" height="16" viewBox="0 0 16 16"><path fill="none" stroke="#fff" d="M.5 0V2.500H10.500V0M.5 5.500H10.500V11.500H.5ZM.5 16V13.500H10.500V16M14.500 0V3M14.500 9V16"></path><rect x="13" y="4.500" width="3" height="3" fill="#fff"></rect></svg></button>
                <button class="run" aria-label="File Explorer"><svg width="22" height="20" viewBox="0 0 22 20"><path fill="#d99a1c" d="M0 0H9L11 2.500V6H0Z"></path><path fill="#fcd462" d="M0 4H9L11 2H22V19H0Z"></path><path fill="#3f93d6" d="M4 20V12Q4 10.500 5.500 10.500H16.500Q18 10.500 18 12V20H14.500V15H7.500V20Z"></path></svg></button>
                <button aria-label="Firefox">${firefoxIcon("a")}</button>
                <button class="run" aria-label="Week log"><svg width="19" height="24" viewBox="0 0 19 24"><rect width="19" height="24" fill="#10108c"></rect><text x="1" y="7" font-size="6" font-weight="700" fill="#dfe4ff" font-family="Liberation Mono, monospace">WEEK</text><path stroke="#9aa0e8" d="M0 9.500H19M0 12.500H19M0 15.500H19"></path><path stroke="#8f95dc" stroke-width="2" d="M0 18H19M0 20.500H19"></path><rect y="21" width="19" height="3" fill="#9fa3dc"></rect></svg></button>
                <button class="now" aria-label="Firefox window">${firefoxIcon("b")}</button>
                <button class="run" aria-label="Scan sched"><svg width="24" height="24" viewBox="0 0 24 24"><rect x=".5" y=".5" width="23" height="23" fill="#c4c4c4" stroke="#111"></rect><text x="1" y="10" font-size="9" fill="#111" font-family="Liberation Sans, sans-serif">Scan</text><text x="1" y="18" font-size="8" fill="#111" font-family="Liberation Sans, sans-serif">sched</text></svg></button>
              </div>
              <div class="strip"></div>
            </div>
            <div class="tray">
              <button class="lang">ENG</button>
              <time datetime="2023-08-13T06:20">06:20<br>13/08/2023</time>
              <button class="note" aria-label="Notifications"><svg width="16" height="16" viewBox="0 0 16 16"><path fill="none" stroke="#fff" d="M.5.500H15.500V12.500H10.500L8 15L5.500 12.500H.5Z"></path></svg></button>
            </div>
          </footer>
        </div>
      </main>
    </div>`;
  }
}
